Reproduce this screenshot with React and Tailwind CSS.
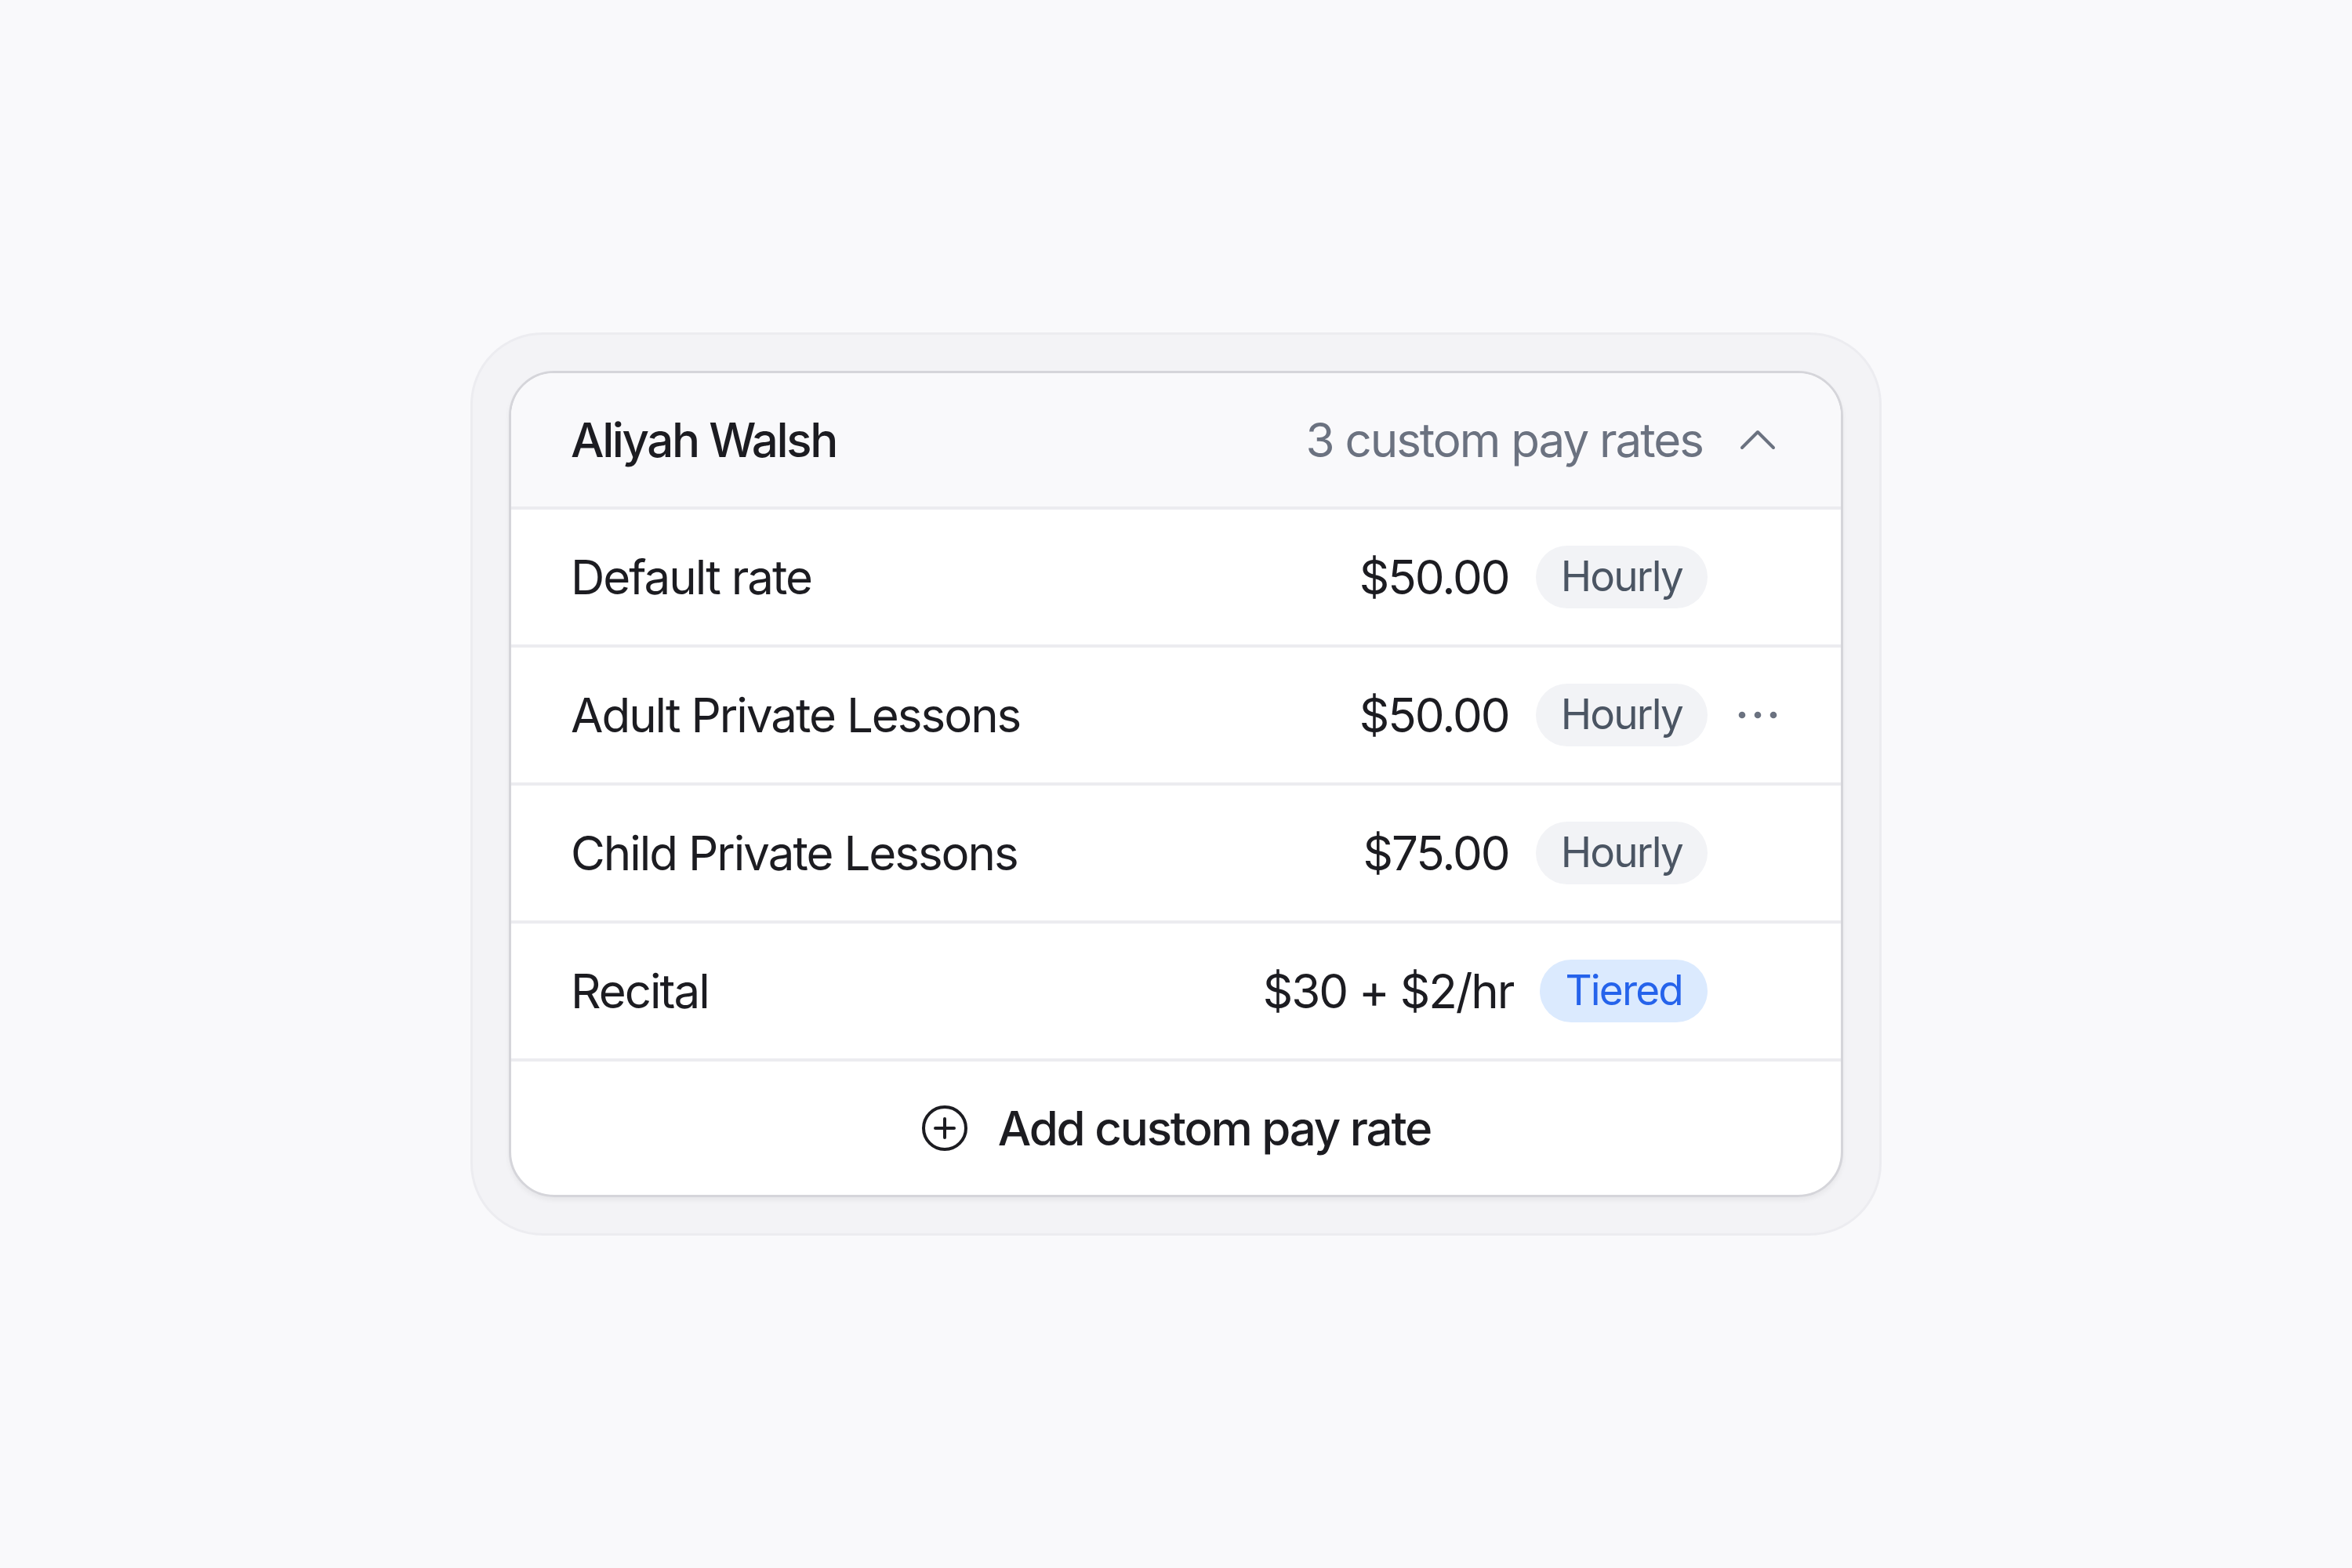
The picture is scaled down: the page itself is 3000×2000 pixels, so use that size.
import React from "react";

const rows = [
  { label: "Default rate", price: "$50.00", badge: "Hourly", tone: "gray", menu: false },
  { label: "Adult Private Lessons", price: "$50.00", badge: "Hourly", tone: "gray", menu: true },
  { label: "Child Private Lessons", price: "$75.00", badge: "Hourly", tone: "gray", menu: false },
  { label: "Recital", price: "$30 + $2/hr", badge: "Tiered", tone: "blue", menu: false },
];

function Dots() {
  return (
    <svg width="50" height="12" viewBox="0 0 50 12" fill="#6b7280">
      <circle cx="5" cy="6" r="4.3" />
      <circle cx="25" cy="6" r="4.3" />
      <circle cx="45" cy="6" r="4.3" />
    </svg>
  );
}

function Chevron() {
  return (
    <svg width="46" height="28" viewBox="0 0 46 28" fill="none" stroke="#6b7280" strokeWidth="4" strokeLinecap="round" strokeLinejoin="round">
      <polyline points="3,24 23,4 43,24" />
    </svg>
  );
}

function PlusCircle() {
  return (
    <svg width="60" height="60" viewBox="0 0 60 60" fill="none" stroke="#1c1c21" strokeWidth="4" strokeLinecap="round">
      <circle cx="30" cy="30" r="27" />
      <line x1="30" y1="18" x2="30" y2="42" />
      <line x1="18" y1="30" x2="42" y2="30" />
    </svg>
  );
}

export default function App() {
  return (
    <div
      className="w-full h-screen flex items-center justify-center bg-[#f9f9fb]"
      style={{ fontFamily: "Inter, 'Noto Sans', sans-serif" }}
    >
      <div className="p-[46px] rounded-[92px] border-[3px] border-[#ececf0] bg-[#f3f3f6]">
        <div className="w-[1702px] rounded-[58px] border-[3px] border-[#d5d5da] bg-white overflow-hidden shadow-[0_4px_6px_rgba(0,0,0,0.05)]">
          {/* Header */}
          <div className="h-[174px] flex items-center justify-between px-[76px] bg-[#f9f9fb] border-b-4 border-[#ececf0]">
            <span className="text-[60px] font-medium text-[#1c1c21] tracking-[-2.4px]">Aliyah Walsh</span>
            <div className="flex items-center gap-[40px]">
              <span className="text-[60px] text-[#6b7280] tracking-[-2px]">3 custom pay rates</span>
              <div className="w-[60px] flex items-center justify-center">
                <Chevron />
              </div>
            </div>
          </div>
          {/* Rows */}
          {rows.map((r) => (
            <div
              key={r.label}
              className="h-[176px] flex items-center justify-between px-[76px] border-b-4 border-[#ececf0]"
            >
              <span className="text-[60px] text-[#1c1c21] tracking-[-2px]">{r.label}</span>
              <div className="flex items-center gap-[34px]">
                <span className="text-[60px] text-[#1c1c21] tracking-[-2px]">{r.price}</span>
                <span
                  className={
                    r.tone === "blue"
                      ? "h-[80px] px-[32px] rounded-full flex items-center text-[53px] tracking-[-1.8px] bg-[#dbeafe] text-[#2563eb]"
                      : "h-[80px] px-[32px] rounded-full flex items-center text-[53px] tracking-[-1.8px] bg-[#f2f3f6] text-[#4b5563]"
                  }
                >
                  {r.badge}
                </span>
                <div className="w-[60px] flex items-center justify-center">
                  {r.menu ? <Dots /> : null}
                </div>
              </div>
            </div>
          ))}
          {/* Footer */}
          <div className="h-[170px] flex items-center justify-center gap-[38px]">
            <PlusCircle />
            <span className="text-[60px] font-medium text-[#1c1c21] tracking-[-2.2px]">Add custom pay rate</span>
          </div>
        </div>
      </div>
    </div>
  );
}
